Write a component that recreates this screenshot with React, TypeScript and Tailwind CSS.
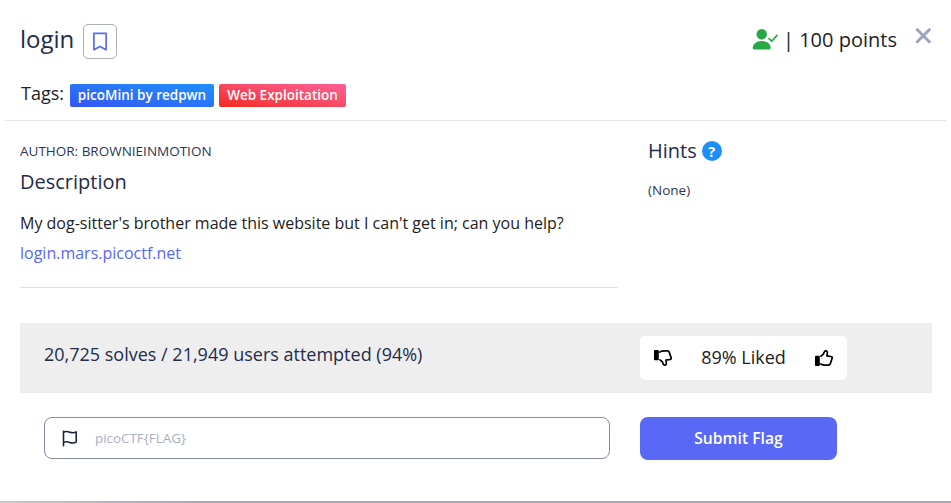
import React from "react";

function PersonCheck() {
  return (
    <svg className="mt-[4px] mr-[4px]" width="27" height="22" viewBox="0 0 27 22" fill="none">
      <circle cx="9.7" cy="6.3" r="5.2" fill="#28a745" />
      <path d="M2.200 21.400C1.300 21.400.7 20.900.7 20C.7 16.500 4 13 9.700 13S18.700 16.500 18.700 20C18.700 20.900 18.100 21.400 17.200 21.400z" fill="#28a745" />
      <path d="M17 10.600L19.700 13.200L25 7.400" stroke="#28a745" strokeWidth="1.7" strokeLinecap="round" strokeLinejoin="round" />
    </svg>
  );
}

function Bookmark() {
  return (
    <svg width="16" height="20" viewBox="0 0 16 20" fill="none" stroke="#5968f5" strokeWidth="1.7" strokeLinejoin="round">
      <path d="M1.9 1.4h12.2v16.4L8 14.5 1.9 17.8z" />
    </svg>
  );
}

function Close() {
  return (
    <svg width="16" height="16" viewBox="0 0 16 16" fill="none" stroke="#9ba4bf" strokeWidth="3" strokeLinecap="round">
      <path d="M2.300 1.700l12 12M14.300 1.700l-12 12" />
    </svg>
  );
}

function ThumbDown() {
  return (
    <svg width="20" height="18" viewBox="0 0 20 18" fill="none">
      <rect x="1" y="1" width="4.8" height="10.2" rx="0.8" fill="#000" />
      <path d="M6.8 3.1L9 2.1C11 1.7 13 1.8 14.6 1.9C15.5 2 16 2.6 16.3 3.4L18.1 8.6C18.4 9.7 17.9 10.4 16.9 10.5L12.9 11.2L13.4 14C13.5 16.4 10.8 16.8 10.2 15L9.4 12.9L7 10.9" stroke="#000" strokeWidth="1.7" strokeLinecap="round" strokeLinejoin="round" />
    </svg>
  );
}

function ThumbUp() {
  return (
    <svg width="20" height="18" viewBox="0 0 20 18" fill="none">
      <rect x="1" y="6.8" width="4.8" height="10.2" rx="0.8" fill="#000" />
      <path d="M6.8 14.9L9 15.9C11 16.3 13 16.2 14.6 16.1C15.5 16 16 15.4 16.3 14.6L18.1 9.4C18.4 8.3 17.9 7.6 16.9 7.5L12.9 6.8L13.4 4C13.5 1.6 10.8 1.2 10.2 3L9.4 5.1L7 7.1" stroke="#000" strokeWidth="1.7" strokeLinecap="round" strokeLinejoin="round" />
    </svg>
  );
}

function Flag() {
  return (
    <svg width="16" height="17" viewBox="0 0 16 17" fill="none" stroke="#1e2440" strokeWidth="1.6" strokeLinecap="round" strokeLinejoin="round">
      <path d="M1.5 1.3v14.4M1.5 2.2C4 1 5.5 1.4 7.8 2.2S12 3 14.2 1.9v10.2c-2.200 1.100-4.100 1.100-6.400.3s-3.800-1.200-6.300 0" />
    </svg>
  );
}

export default function App() {
  return (
    <div className="flex h-[503px] w-[951px] flex-col overflow-hidden bg-white font-['Open_Sans','Noto_Sans',sans-serif] text-[#222222]">
      <header className="mx-[5px] flex h-[121px] shrink-0 flex-col border-b border-[#e5e5e8] pl-[15px]">
        <div className="flex h-[60px] items-start justify-between pt-[24px]">
          <div className="flex items-start">
            <h1 className="w-[63px] text-[24px] leading-[30px] text-[#242c48]">login</h1>
            <button className="flex h-[35px] w-[34px] items-center justify-center rounded-[5px] border border-[#a9afbb]">
              <Bookmark />
            </button>
          </div>
          <div className="flex items-start pr-[15px]">
            <PersonCheck />
            <span className="w-[132px] text-[20px] leading-[32px] whitespace-nowrap">| 100 points</span>
            <button className="mt-[4px]" aria-label="Close">
              <Close />
            </button>
          </div>
        </div>
        <div className="mt-[20px] flex items-center pl-[1px]">
          <span className="w-[49px] text-[18px] leading-[27px]">Tags:</span>
          <span className="mt-[3px] mr-[5px] flex h-[23px] w-[144px] justify-center rounded-[2px] bg-linear-to-tr from-[#3454f5] to-[#1e90fb] text-[13.5px] leading-[22px] font-semibold whitespace-nowrap text-white">picoMini by redpwn</span>
          <span className="mt-[3px] flex h-[23px] w-[127px] justify-center rounded-[2px] bg-linear-to-tr from-[#f22613] to-[#ff5f98] text-[13.5px] leading-[22px] font-semibold whitespace-nowrap text-white">Web Exploitation</span>
        </div>
      </header>

      <main className="flex h-[202px] shrink-0 pl-[20px]">
        <section className="flex h-[167px] w-[598px] flex-col border-b border-[#e0e0e3] pt-[20px]">
          <p className="text-[13.5px] leading-[20px] text-[#2d3555]">AUTHOR: BROWNIEINMOTION</p>
          <h2 className="mt-[6px] text-[20px] leading-[30px] text-[#242c48]">Description</h2>
          <p className="mt-[14px] text-[16px] leading-[24px] whitespace-nowrap">My dog-sitter's brother made this website but I can't get in; can you help?</p>
          <a className="mt-[6px] text-[16px] leading-[24px] text-[#5968f5]">login.mars.picoctf.net</a>
        </section>
        <section className="ml-[30px] pt-[15px]">
          <div className="flex items-center gap-[5px]">
            <h2 className="text-[20px] leading-[30px] text-[#242c48]">Hints</h2>
            <span className="flex h-[20px] w-[20px] items-center justify-center rounded-full bg-[#1e8efb] text-[14.5px] leading-[19px] font-bold text-white">?</span>
          </div>
          <p className="mt-[14px] text-[13.5px] leading-[20px] text-[#2d3555]">(None)</p>
        </section>
      </main>

      <section className="mx-[20px] mr-[19px] flex h-[70px] shrink-0 bg-[#eeeeee] pt-[13px] pl-[24px]">
        <p className="w-[596px] text-[18px] leading-[36px] whitespace-nowrap text-[#242c48]">20,725 solves / 21,949 users attempted (94%)</p>
        <div className="flex h-[44px] w-[207px] items-center justify-between rounded-[5px] bg-white px-[13px]">
          <ThumbDown />
          <span className="pb-[2px] text-[18px] leading-[27px] whitespace-nowrap">89% Liked</span>
          <ThumbUp />
        </div>
      </section>

      <form className="mt-[24px] flex shrink-0 pl-[44px]">
        <div className="mr-[30px] flex h-[42px] w-[566px] items-center rounded-[8px] border border-[#858b9f] pl-[17px]">
          <Flag />
          <span className="ml-[17px] text-[13.4px] leading-[20px] text-[#a9afbe]">picoCTF&#123;FLAG&#125;</span>
        </div>
        <button type="button" className="h-[43px] w-[197px] rounded-[8px] bg-[#5968f5] pb-[1px] text-[15.7px] leading-[24px] font-semibold text-white">Submit Flag</button>
      </form>

      <footer className="mt-auto h-[2px] shrink-0 bg-linear-to-r from-[#c8c8cc] via-[#aaa8b6] via-20% to-[#aaa8b6]" />
    </div>
  );
}
